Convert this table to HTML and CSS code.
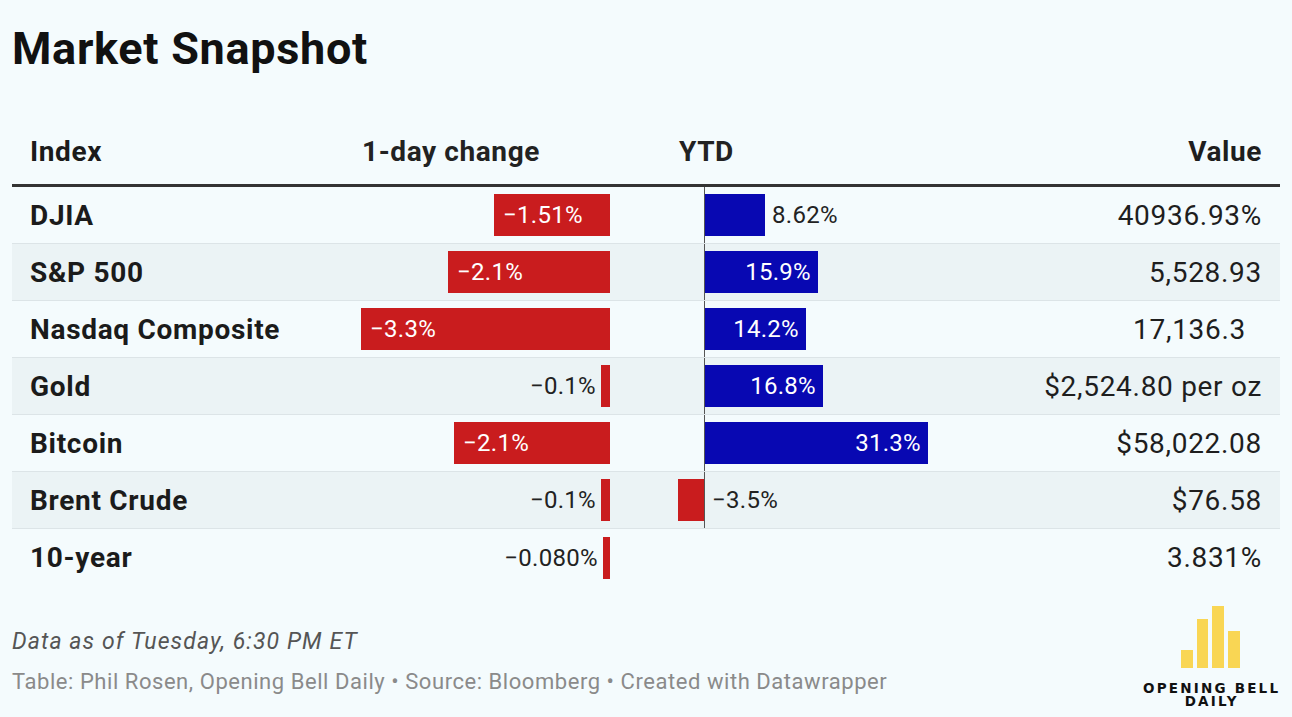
FILE: index.html
```html
<!DOCTYPE html>
<html lang="en">
<head>
<meta charset="utf-8">
<title>Market Snapshot</title>
<link rel="stylesheet" href="styles.css">
</head>
<body>
<div class="page">
  <h1 class="title">Market Snapshot</h1>
  <div class="table">
    <div class="row head">
      <div class="c-name">Index</div>
      <div class="c-day">1-day change</div>
      <div class="c-gap"></div>
      <div class="c-ytd-head">YTD</div>
      <div class="c-val">Value</div>
    </div>

    <div class="row">
      <div class="c-name">DJIA</div>
      <div class="c-day"><div class="bar red in" style="width:116px">−1.51%</div></div>
      <div class="c-gap"></div>
      <div class="c-ytd"><div class="neg"></div><div class="pos"><div class="bar blue" style="width:60px"></div><span class="lbl out-r">8.62%</span></div></div>
      <div class="c-val">40936.93%</div>
    </div>

    <div class="row alt">
      <div class="c-name">S&amp;P 500</div>
      <div class="c-day"><div class="bar red in" style="width:162px">−2.1%</div></div>
      <div class="c-gap"></div>
      <div class="c-ytd"><div class="neg"></div><div class="pos"><div class="bar blue in-r" style="width:113px">15.9%</div></div></div>
      <div class="c-val">5,528.93</div>
    </div>

    <div class="row">
      <div class="c-name">Nasdaq Composite</div>
      <div class="c-day"><div class="bar red in" style="width:249px">−3.3%</div></div>
      <div class="c-gap"></div>
      <div class="c-ytd"><div class="neg"></div><div class="pos"><div class="bar blue in-r" style="width:101px">14.2%</div></div></div>
      <div class="c-val pad">17,136.3</div>
    </div>

    <div class="row alt">
      <div class="c-name">Gold</div>
      <div class="c-day"><span class="lbl out-l">−0.1%</span><div class="bar red" style="width:9px"></div></div>
      <div class="c-gap"></div>
      <div class="c-ytd"><div class="neg"></div><div class="pos"><div class="bar blue in-r" style="width:118px">16.8%</div></div></div>
      <div class="c-val">$2,524.80 per oz</div>
    </div>

    <div class="row">
      <div class="c-name">Bitcoin</div>
      <div class="c-day"><div class="bar red in" style="width:156px">−2.1%</div></div>
      <div class="c-gap"></div>
      <div class="c-ytd"><div class="neg"></div><div class="pos"><div class="bar blue in-r" style="width:223px">31.3%</div></div></div>
      <div class="c-val">$58,022.08</div>
    </div>

    <div class="row alt">
      <div class="c-name">Brent Crude</div>
      <div class="c-day"><span class="lbl out-l">−0.1%</span><div class="bar red" style="width:9px"></div></div>
      <div class="c-gap"></div>
      <div class="c-ytd"><div class="neg"><div class="bar red" style="width:26px"></div></div><div class="pos"><span class="lbl out-r">−3.5%</span></div></div>
      <div class="c-val">$76.58</div>
    </div>

    <div class="row last">
      <div class="c-name">10-year</div>
      <div class="c-day"><span class="lbl out-l">−0.080%</span><div class="bar red" style="width:7px"></div></div>
      <div class="c-gap"></div>
      <div class="c-ytd empty"></div>
      <div class="c-val">3.831%</div>
    </div>
  </div>

  <footer class="footer">
    <div class="notes">
      <p class="note-date">Data as of Tuesday, 6:30 PM ET</p>
      <p class="note-src">Table: Phil Rosen, Opening Bell Daily • Source: Bloomberg • Created with Datawrapper</p>
    </div>
    <div class="logo">
      <svg class="logo-bars" width="59" height="62" viewBox="0 0 59 62" aria-hidden="true">
        <rect x="0" y="44" width="12" height="18" fill="#f9d654"/>
        <rect x="16" y="13" width="11" height="49" fill="#f9d654"/>
        <rect x="31" y="0" width="12" height="62" fill="#f9d654"/>
        <rect x="47" y="25" width="12" height="37" fill="#f9d654"/>
      </svg>
      <div class="logo-text">OPENING BELL</div>
      <div class="logo-text second">DAILY</div>
    </div>
  </footer>
</div>
</body>
</html>
```

FILE: styles.css
```css
* { box-sizing: border-box; }

html, body {
  margin: 0;
  padding: 0;
  background: #f4fbfd;
}

body {
  font-family: Roboto, "Liberation Sans", Arial, sans-serif;
  color: #1e1e1e;
  width: 1292px;
  height: 717px;
  overflow: hidden;
}

.page {
  padding: 23px 12px 0 12px;
}

.title {
  margin: 0;
  font-size: 45px;
  line-height: 52px;
  font-weight: 700;
  letter-spacing: 0.7px;
  color: #111;
}

.table {
  margin-top: 61px;
  width: 1268px;
}

.row {
  display: grid;
  grid-template-columns: 331px 249px 62px 300px 1fr;
  padding: 0 18px;
  height: 57px;
  align-items: center;
  border-bottom: 1px solid #dce4e7;
  font-size: 28px;
  letter-spacing: 0.7px;
}

.row.alt { background: #ebf3f5; }
.row.last { border-bottom: none; }

.row.head {
  height: auto;
  padding-top: 0;
  padding-bottom: 16px;
  border-bottom: 3px solid #333;
  font-weight: 700;
  line-height: 32px;
  letter-spacing: 0.6px;
  color: #222;
}

.c-name {
  font-weight: 700;
  color: #1b1b1b;
}

.c-day {
  display: flex;
  justify-content: flex-end;
  align-items: center;
  height: 100%;
}

.head .c-day {
  justify-content: flex-start;
  padding-left: 1px;
}

.c-ytd-head {
  padding-left: 7px;
}

.c-ytd {
  display: flex;
  height: 100%;
}

.neg {
  width: 32px;
  display: flex;
  justify-content: flex-end;
  align-items: center;
}

.pos {
  flex: 1;
  display: flex;
  align-items: center;
  border-left: 1px solid #555;
}

.c-val {
  text-align: right;
  color: #1e1e1e;
}

.c-val.pad { padding-right: 16px; }

.bar {
  height: 42px;
  display: flex;
  align-items: center;
  font-size: 24px;
  letter-spacing: 0.3px;
  color: #fff;
  flex: none;
}

.bar.red { background: #c91c1e; }
.bar.blue { background: #0808b2; }

.bar.in { padding-left: 9px; }
.bar.in-r { justify-content: flex-end; padding-right: 7px; }

.lbl {
  font-size: 24px;
  letter-spacing: 0.3px;
  color: #222;
}

.lbl.out-l { margin-right: 5px; }
.lbl.out-r { margin-left: 7px; }

.footer {
  display: flex;
  justify-content: space-between;
  align-items: flex-start;
  margin-top: 20px;
  padding-right: 2px;
}

.notes {
  padding-top: 22px;
}

.notes p { margin: 0; }

.note-date {
  font-style: italic;
  font-size: 23px;
  line-height: 28px;
  letter-spacing: 1.1px;
  color: #555;
}

.note-src {
  margin-top: 12px !important;
  font-size: 22px;
  line-height: 28px;
  letter-spacing: 0.55px;
  color: #8a8a8a;
}

.logo {
  display: flex;
  flex-direction: column;
  align-items: center;
}

.logo-bars {
  display: block;
}

.logo-text {
  font-family: "DejaVu Sans", Lato, sans-serif;
  font-weight: 700;
  font-size: 13.5px;
  line-height: 13px;
  height: 13px;
  letter-spacing: 2.2px;
  text-align: center;
  color: #111;
  margin-right: -2.2px;
  margin-top: 14px;
  white-space: nowrap;
}

.logo-text.second {
  margin-top: 0;
}
```
